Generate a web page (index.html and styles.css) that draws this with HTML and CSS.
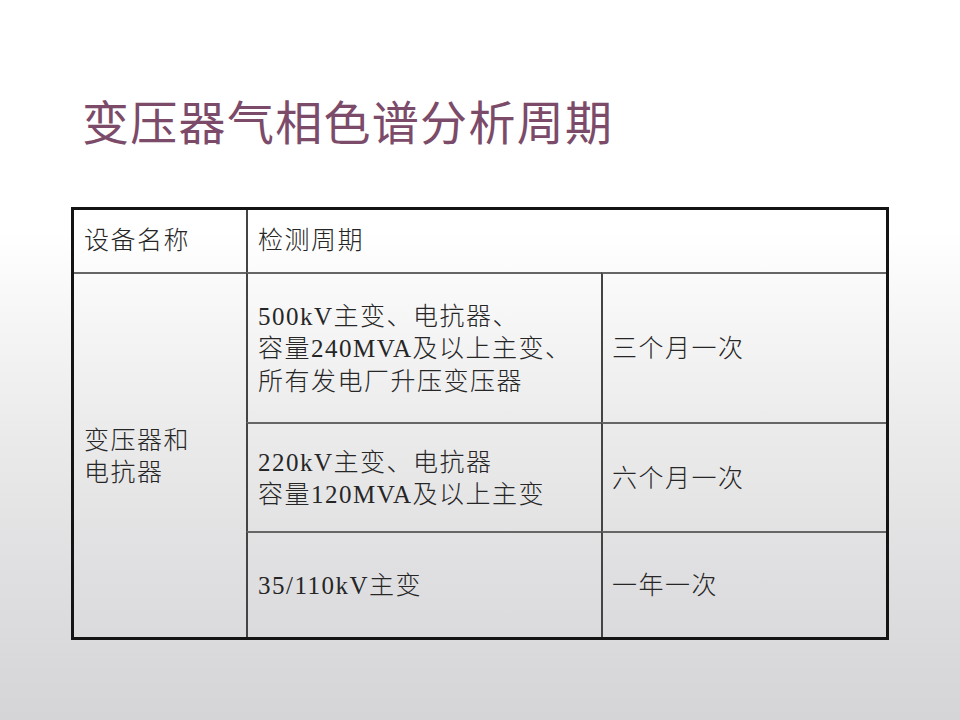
FILE: index.html
```html
<!DOCTYPE html>
<html lang="zh-CN">
<head>
<meta charset="utf-8">
<title>变压器气相色谱分析周期</title>
<link rel="stylesheet" href="styles.css">
</head>
<body>
<div class="slide">
  <h1 class="title">变压器气相色谱分析周期</h1>
  <div class="grid">
    <div class="cell c1 head">设备名称</div>
    <div class="cell c2 span2 head">检测周期</div>
    <div class="cell c1 side rt">变压器和<br>电抗器</div>
    <div class="cell c2 r1 rt">500kV主变、电抗器、<br>容量240MVA及以上主变、<br>所有发电厂升压变压器</div>
    <div class="cell c3 r1 rt">三个月一次</div>
    <div class="cell c2 r2 rt">220kV主变、电抗器<br>容量120MVA及以上主变</div>
    <div class="cell c3 r2 rt">六个月一次</div>
    <div class="cell c2 r3 rt">35/110kV主变</div>
    <div class="cell c3 r3 rt">一年一次</div>
  </div>
</div>
</body>
</html>
```
FILE: styles.css
```css
html, body {
  margin: 0;
  padding: 0;
}
body {
  width: 960px;
  height: 720px;
  overflow: hidden;
  background: linear-gradient(to bottom, #ffffff 0%, #ffffff 32%, #ececec 58%, #e0e0e2 78%, #d5d5d8 100%);
}
.slide {
  width: 960px;
  height: 720px;
  padding-top: 90px;
  box-sizing: border-box;
}
.title {
  margin: 0 0 0 82px;
  font-family: "Noto Sans CJK SC", "Noto Sans", sans-serif;
  font-weight: 400;
  font-size: 47px;
  line-height: 60px;
  color: #7c4b69;
  letter-spacing: 1.3px;
}
.grid {
  margin: 57px 0 0 71px;
  width: 818px;
  height: 433px;
  box-sizing: border-box;
  border: 3px solid #141414;
  display: grid;
  grid-template-columns: 172px 355px 285px;
  grid-template-rows: 62px 150px 109px 106px;
  font-family: "Liberation Serif", "Noto Sans CJK SC", serif;
  font-weight: 300;
  font-size: 25px;
  line-height: 32.5px;
  color: #262626;
}
.cell {
  display: flex;
  align-items: center;
  padding-left: 10px;
  padding-top: 3px;
  box-sizing: border-box;
  letter-spacing: 1.5px;
}
.c1 { grid-column: 1; }
.c2 { grid-column: 2; border-left: 2px solid #444; }
.c3 { grid-column: 3; border-left: 2px solid #444; }
.span2 { grid-column: 2 / span 2; }
.head { grid-row: 1; padding-top: 1px; }
.side { grid-row: 2 / span 3; }
.r1 { grid-row: 2; }
.r2 { grid-row: 3; }
.r3 { grid-row: 4; }
.rt { border-top: 2px solid #666; }
.c3 { padding-left: 9px; }
```
